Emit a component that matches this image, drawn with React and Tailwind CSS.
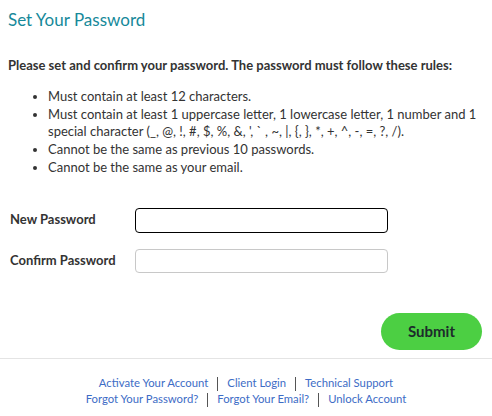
const rules = [
  'Must contain at least 12 characters.',
  'Must contain at least 1 uppercase letter, 1 lowercase letter, 1 number and 1 special character (_, @, !, #, $, %, &, \', ` , ~, |, {, }, *, +, ^, -, =, ?, /).',
  'Cannot be the same as previous 10 passwords.',
  'Cannot be the same as your email.',
];

const Sep = () => <span className="mx-[9px] inline-block w-px h-[14px] bg-[#555] align-middle" />;

export default function App() {
  return (
    <div className="w-[492px] h-[416px] bg-white text-[#333] font-['Lato',sans-serif] overflow-hidden">
      <div className="px-2 pt-[9px]">
        <h1 className="text-[17px] leading-[22px] text-[#16899a]">Set Your Password</h1>
        <p className="mt-[25px] text-[13px] font-bold leading-[18px]">Please set and confirm your password. The password must follow these rules:</p>
        <ul className="mt-[14px] pl-[40px] list-disc text-[13px] leading-[17.7px]">
          {rules.map((r, i) => <li key={i}>{r}</li>)}
        </ul>
        <div className="mt-[31px] flex flex-col gap-[16px]">
          <div className="flex items-center">
            <label className="w-[127px] pl-[2px] text-[13px] font-bold">New Password</label>
            <input className="w-[253px] h-[25px] rounded-[4px] border border-black outline-none" />
          </div>
          <div className="flex items-center">
            <label className="w-[127px] pl-[2px] text-[13px] font-bold">Confirm Password</label>
            <input className="w-[253px] h-[24px] rounded-[4px] border border-[#c8c8c8] outline-none" />
          </div>
        </div>
        <div className="mt-[40px] flex justify-end pr-[2px]">
          <button className="w-[101px] h-[37px] rounded-full bg-[#4ccf43] text-[15px] font-bold text-[#1d2b2b]">Submit</button>
        </div>
      </div>
      <div className="mt-[8px] border-t border-[#e4e4e4] pt-[16px] text-[11.3px] leading-[15px] text-[#3d6cc6] text-center">
        <div>Activate Your Account<Sep />Client Login<Sep />Technical Support</div>
        <div>Forgot Your Password?<Sep />Forgot Your Email?<Sep />Unlock Account</div>
      </div>
    </div>
  );
}
